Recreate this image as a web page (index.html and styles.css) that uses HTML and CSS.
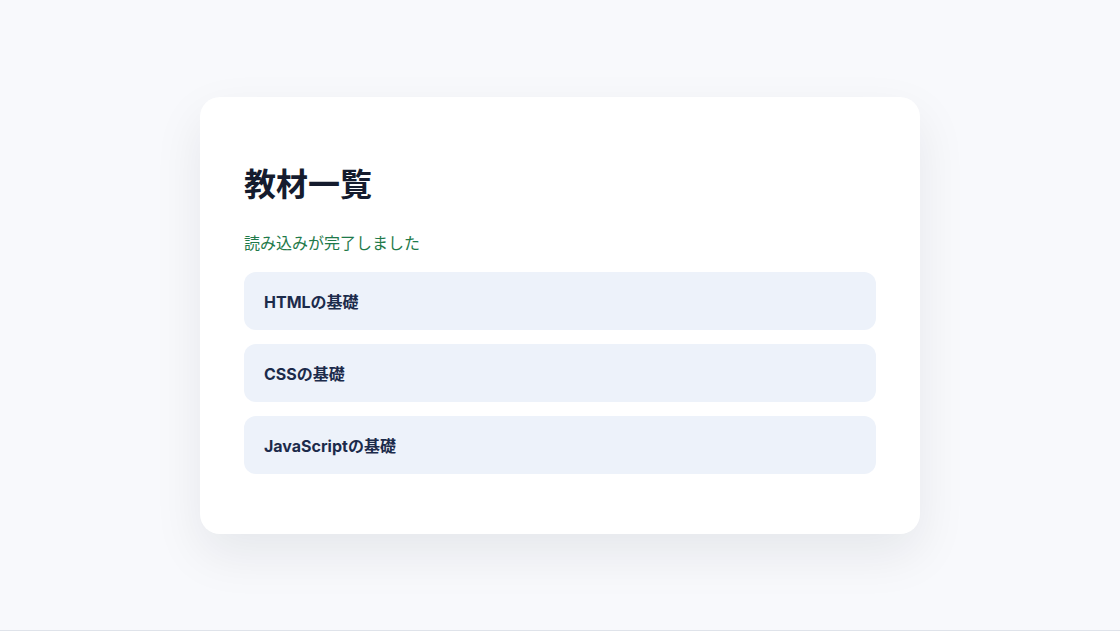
FILE: index.html
```html
<!DOCTYPE html>
<html lang="ja">
<head>
  <meta charset="UTF-8">
  <meta name="viewport" content="width=device-width, initial-scale=1.0">
  <title>教材一覧</title>
  <link rel="stylesheet" href="styles.css">
</head>
<body>
  <div class="container">
    <h1>教材一覧</h1>
    <p class="status">読み込みが完了しました</p>
    <ul class="list">
      <li class="item">HTMLの基礎</li>
      <li class="item">CSSの基礎</li>
      <li class="item">JavaScriptの基礎</li>
    </ul>
  </div>
</body>
</html>
```

FILE: styles.css
```css
html, body {
  margin: 0;
  padding: 0;
}
body {
  font-family: Inter, "Noto Sans CJK JP", sans-serif;
  display: flex;
  justify-content: center;
  align-items: center;
  height: 100vh;
  box-sizing: border-box;
  border-bottom: 1px solid #dfe3ea;
  background-color: #f8f9fc;
}
.container {
  background: #fff;
  border-radius: 20px;
  box-shadow: 0 20px 50px rgba(15, 23, 42, 0.08);
  padding: 44px;
  width: 720px;
  box-sizing: border-box;
}
h1 {
  font-size: 32px;
  line-height: 40px;
  font-weight: 700;
  color: #151c2e;
  margin: 24px 0 0;
}
.status {
  font-size: 16px;
  line-height: 24px;
  color: #1f7a4a;
  margin: 26px 0 0;
}
.list {
  list-style: none;
  padding: 0;
  margin: 17px 0 16px;
  display: flex;
  flex-direction: column;
  gap: 14px;
}
.item {
  background: #edf2fa;
  border-radius: 12px;
  height: 58px;
  padding: 0 20px;
  display: flex;
  align-items: center;
  font-size: 16px;
  font-weight: 700;
  color: #1c2b4b;
}
```
